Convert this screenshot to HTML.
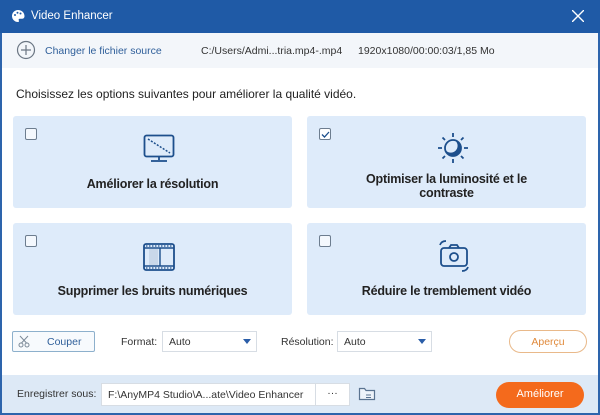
<!DOCTYPE html>
<html><head><style>
*{margin:0;padding:0;box-sizing:border-box}
body{width:600px;height:415px;background:#fff;font-family:"Liberation Sans",sans-serif;position:relative;overflow:hidden;font-size:11px;color:#333}
.abs{position:absolute}
.title{left:0;top:0;width:600px;height:33px;background:#1f5aa6}
.frame{left:0;top:33px;width:600px;height:382px;border:2px solid #2d64ac;border-top:none}
.card{background:#deebfa;border-radius:3px;position:absolute}
.cb{position:absolute;left:12px;top:12px;width:12px;height:12px;border:1px solid #6d7d8f;border-radius:2px;background:#f4f8fd}
.ct{position:absolute;width:100%;text-align:center;font-weight:bold;font-size:12.5px;color:#222;letter-spacing:-0.2px}
.sel{position:absolute;height:21px;border:1px solid #d7dde4;background:#fff;font-size:10.5px;padding:4px 6px}
</style></head><body>
<div class="abs title">
 <svg class="abs" style="left:11px;top:9px" width="14" height="14" viewBox="0 0 14 14"><path d="M7 1a6 6 0 1 0 0 12c1 0 1.2-.8.8-1.5-.5-.8 0-1.7 1-1.7H11a2.5 2.5 0 0 0 2.5-2.5C13.5 3.6 10.6 1 7 1z" fill="#fff"/><circle cx="4" cy="6" r="1" fill="#1f5aa6"/><circle cx="6.5" cy="3.8" r="1" fill="#1f5aa6"/><circle cx="9.5" cy="4.5" r="1" fill="#1f5aa6"/></svg>
 <div class="abs" style="left:31px;top:10px;color:#fff;font-size:11.5px">Video Enhancer</div>
 <svg class="abs" style="left:572px;top:10px" width="12" height="12"><path d="M0 0L12 12M12 0L0 12" stroke="#fff" stroke-width="1.4"/></svg>
</div>
<div class="abs frame"></div>
<div class="abs" style="left:2px;top:33px;width:596px;height:35px;background:#f3f6fa"></div>
<svg class="abs" style="left:16px;top:40px" width="20" height="20"><circle cx="10" cy="10" r="8.5" fill="none" stroke="#6b7683" stroke-width="1.2"/><path d="M10 5v10M5 10h10" stroke="#6b7683" stroke-width="1.2"/></svg>
<div class="abs" style="left:45px;top:45px;color:#2f5f9a;font-size:10.5px">Changer le fichier source</div>
<div class="abs" style="left:201px;top:45px;font-size:10.5px">C:/Users/Admi...tria.mp4-.mp4</div>
<div class="abs" style="left:358px;top:45px;font-size:10.5px">1920x1080/00:00:03/1,85 Mo</div>
<div class="abs" style="left:16px;top:87px;font-size:12px;color:#222">Choisissez les options suivantes pour améliorer la qualité vidéo.</div>

<div class="card" style="left:13px;top:116px;width:279px;height:92px"><div class="cb"></div>
 <svg class="abs" style="left:130px;top:18px" width="32" height="30" viewBox="0 0 32 30"><rect x="1.5" y="1.5" width="29" height="21" rx="2" fill="none" stroke="#1d4f8c" stroke-width="1.8"/><path d="M5 5l22 14" stroke="#1d4f8c" stroke-width="1.5" stroke-dasharray="2 1.5"/><path d="M16 23v3M8 27h16" stroke="#1d4f8c" stroke-width="1.8"/></svg>
 <div class="ct" style="top:61px">Améliorer la résolution</div></div>
<div class="card" style="left:307px;top:116px;width:279px;height:92px"><div class="cb" style="background:#fff"><svg style="position:absolute;left:1px;top:1px" width="9" height="9"><path d="M1 4.5l2.5 2.5 4.5-5" fill="none" stroke="#1d4f8c" stroke-width="1.3"/></svg></div>
 <svg class="abs" style="left:128px;top:14px" width="36" height="36" viewBox="0 0 36 36"><circle cx="18" cy="18" r="8.5" fill="#1d4f8c"/><circle cx="15.8" cy="15.8" r="6.8" fill="#deebfa"/><circle cx="18" cy="18" r="8" fill="none" stroke="#1d4f8c" stroke-width="1.8"/><path d="M18 3v4M18 29v4M3 18h4M29 18h4M7.5 7.5l2.5 2.5M28.5 7.5l-2.5 2.5M7.5 28.5l2.5-2.5M28.5 28.5l-2.5-2.5" stroke="#1d4f8c" stroke-width="1.8"/></svg>
 <div class="ct" style="top:56px">Optimiser la luminosité et le<br>contraste</div></div>
<div class="card" style="left:13px;top:223px;width:279px;height:92px"><div class="cb"></div>
 <svg class="abs" style="left:130px;top:20px" width="32" height="28" viewBox="0 0 32 28"><rect x="1" y="1" width="30" height="26" rx="2" fill="none" stroke="#1d4f8c" stroke-width="1.8"/><path d="M1 5h30M1 23h30" stroke="#1d4f8c" stroke-width="1.5"/><path d="M3 3h26M3 25h26" stroke="#1d4f8c" stroke-width="1.3" stroke-dasharray="1.5 1.5"/><rect x="6" y="6" width="9" height="16" fill="#c9d8ea"/><path d="M17 5v18" stroke="#1d4f8c" stroke-width="1.4"/></svg>
 <div class="ct" style="top:61px">Supprimer les bruits numériques</div></div>
<div class="card" style="left:307px;top:223px;width:279px;height:92px"><div class="cb"></div>
 <svg class="abs" style="left:129px;top:15px" width="36" height="36" viewBox="0 0 36 36"><rect x="5" y="10" width="26" height="18" rx="3" fill="none" stroke="#1d4f8c" stroke-width="1.8"/><path d="M13 10l2-3h6l2 3" fill="none" stroke="#1d4f8c" stroke-width="1.8"/><circle cx="18" cy="19" r="4" fill="none" stroke="#1d4f8c" stroke-width="1.8"/><path d="M4 7c1-3 3-4 6-4M32 29c-1 3-3 4-6 4" fill="none" stroke="#1d4f8c" stroke-width="1.8"/></svg>
 <div class="ct" style="top:61px">Réduire le tremblement vidéo</div></div>

<div class="abs" style="left:12px;top:331px;width:83px;height:21px;border:1px solid #8db0cc;border-radius:2px;background:#f7fafd"></div>
<svg class="abs" style="left:18px;top:335px" width="13" height="13"><circle cx="3" cy="10" r="2" fill="none" stroke="#7c8a98"/><circle cx="9" cy="10" r="2" fill="none" stroke="#7c8a98"/><path d="M3.5 8L10 1M8.5 8L2 1" stroke="#7c8a98"/></svg>
<div class="abs" style="left:47px;top:336px;font-size:10.5px;color:#2f5f9a">Couper</div>
<div class="abs" style="left:121px;top:336px;font-size:10.5px">Format:</div>
<div class="sel" style="left:162px;top:331px;width:95px">Auto</div>
<div class="abs" style="left:243px;top:339px;border:4px solid transparent;border-top:5px solid #2a5da8"></div>
<div class="abs" style="left:281px;top:336px;font-size:10.5px">Résolution:</div>
<div class="sel" style="left:337px;top:331px;width:95px">Auto</div>
<div class="abs" style="left:418px;top:339px;border:4px solid transparent;border-top:5px solid #2a5da8"></div>
<div class="abs" style="left:509px;top:330px;width:78px;height:23px;border:1px solid #e9b98a;border-radius:12px;text-align:center;padding-top:5px;font-size:10.5px;color:#e08a3c">Aperçu</div>

<div class="abs" style="left:2px;top:375px;width:596px;height:38px;background:#dde9f6"></div>
<div class="abs" style="left:17px;top:388px;font-size:10.5px">Enregistrer sous:</div>
<div class="sel" style="left:101px;top:383px;width:215px;height:23px;padding-top:5px">F:\AnyMP4 Studio\A...ate\Video Enhancer</div>
<div class="sel" style="left:315px;top:383px;width:35px;height:23px;padding-top:3px;text-align:center">···</div>
<svg class="abs" style="left:358px;top:386px" width="18" height="16"><path d="M1.5 3.5v10h15v-9H8L6.5 2.5h-5z" fill="#eef3f9" stroke="#5a7390" stroke-width="1.2"/><path d="M8 9h5M8 11.5h5" stroke="#5a7390"/></svg>
<div class="abs" style="left:496px;top:382px;width:88px;height:26px;background:#f46a1c;border-radius:13px;color:#fff;text-align:center;padding-top:6px;font-size:11px">Améliorer</div>
</body></html>
